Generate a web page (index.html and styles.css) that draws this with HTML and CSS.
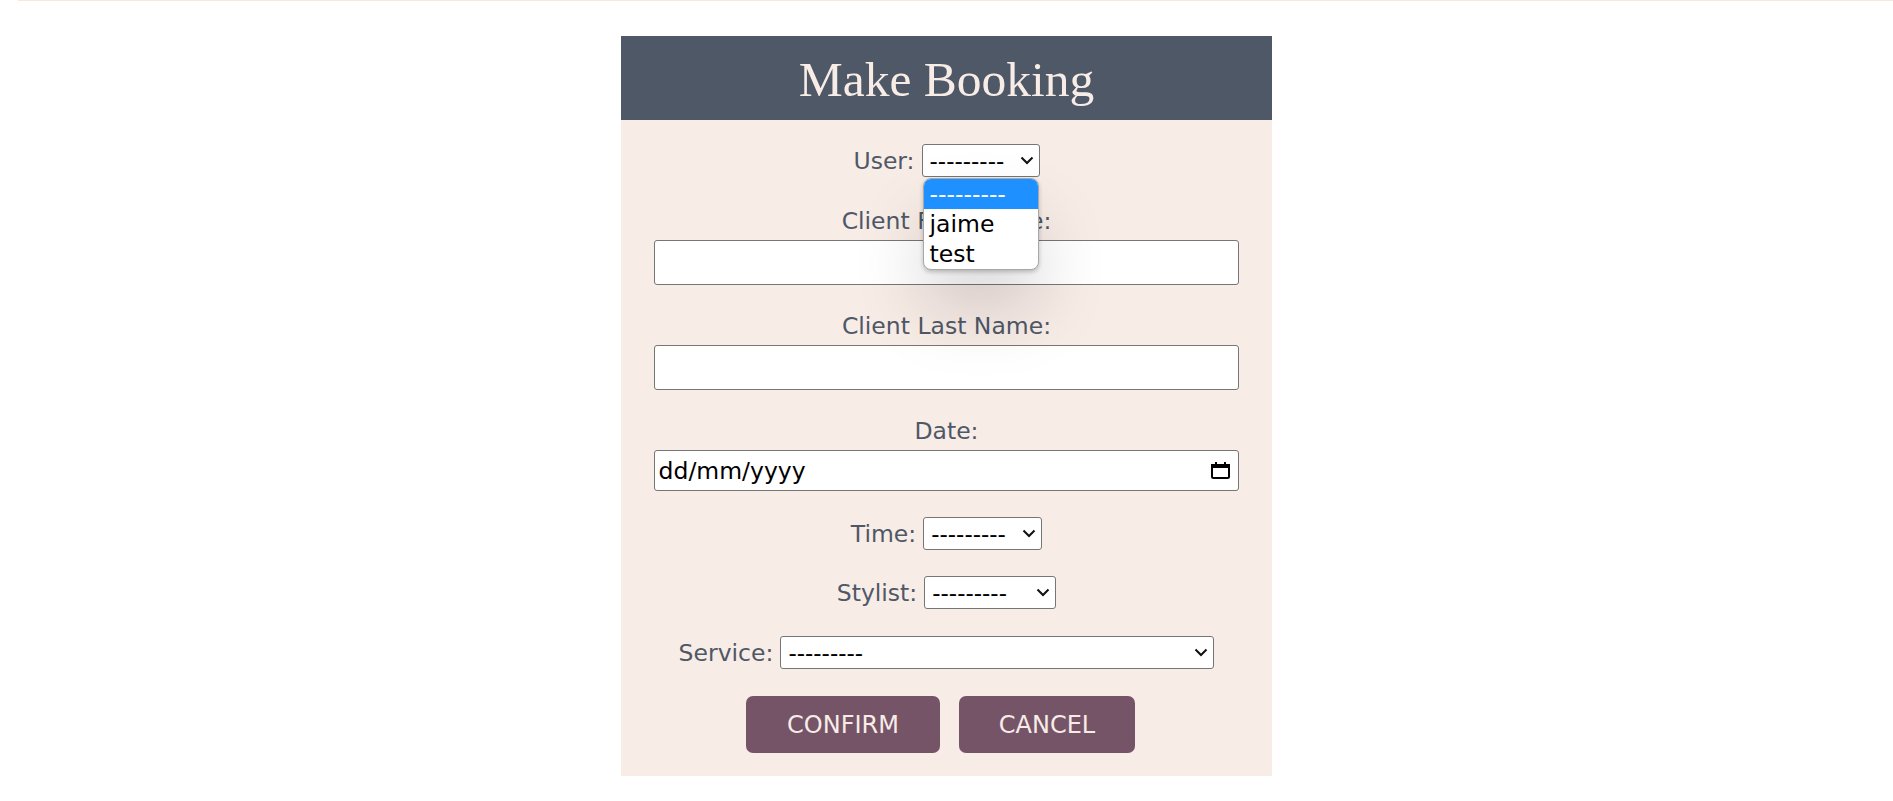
FILE: index.html
```html
<!DOCTYPE html>
<html lang="en">
<head>
<meta charset="utf-8">
<title>Make Booking</title>
<link rel="stylesheet" href="styles.css">
</head>
<body>
<div class="topline"></div>
<main class="booking">
  <h1 class="booking-title">Make Booking</h1>
  <form class="booking-form">
    <div class="inline-row user-row">
      <label class="lbl" for="user">User:</label>
      <div class="select-wrap">
        <select id="user" class="sel sel-user"><option>---------</option><option>jaime</option><option>test</option></select>
        <svg class="chev" width="14" height="9" viewBox="0 0 14 9" aria-hidden="true"><path d="M1.5 1.5 L7 7 L12.5 1.5" fill="none" stroke="#111" stroke-width="2"/></svg>
        <ul class="dropdown">
          <li class="opt opt-active">---------</li>
          <li class="opt">jaime</li>
          <li class="opt">test</li>
        </ul>
      </div>
    </div>
    <div class="field field-first">
      <label class="lbl block-lbl" for="fname">Client First Name:</label>
      <input id="fname" class="text-input" type="text">
    </div>
    <div class="field field-next">
      <label class="lbl block-lbl" for="lname">Client Last Name:</label>
      <input id="lname" class="text-input" type="text">
    </div>
    <div class="field field-next">
      <label class="lbl block-lbl">Date:</label>
      <div class="date-input">
        <span class="date-text">dd/mm/yyyy</span>
        <svg class="cal-icon" width="19" height="17" viewBox="0 0 19 17" aria-hidden="true">
          <rect x="4" y="0" width="2" height="3" fill="#000"/>
          <rect x="13" y="0" width="2" height="3" fill="#000"/>
          <rect x="1" y="3" width="17" height="13" rx="1.5" fill="none" stroke="#000" stroke-width="2"/>
          <rect x="0" y="2" width="19" height="4" fill="#000"/>
        </svg>
      </div>
    </div>
    <div class="inline-row row-time">
      <label class="lbl" for="time">Time:</label>
      <div class="select-wrap">
        <select id="time" class="sel sel-time"><option>---------</option></select>
        <svg class="chev" width="14" height="9" viewBox="0 0 14 9" aria-hidden="true"><path d="M1.5 1.5 L7 7 L12.5 1.5" fill="none" stroke="#111" stroke-width="2"/></svg>
      </div>
    </div>
    <div class="inline-row row-stylist">
      <label class="lbl" for="stylist">Stylist:</label>
      <div class="select-wrap">
        <select id="stylist" class="sel sel-stylist"><option>---------</option></select>
        <svg class="chev" width="14" height="9" viewBox="0 0 14 9" aria-hidden="true"><path d="M1.5 1.5 L7 7 L12.5 1.5" fill="none" stroke="#111" stroke-width="2"/></svg>
      </div>
    </div>
    <div class="inline-row row-service">
      <label class="lbl" for="service">Service:</label>
      <div class="select-wrap">
        <select id="service" class="sel sel-service"><option>---------</option></select>
        <svg class="chev" width="14" height="9" viewBox="0 0 14 9" aria-hidden="true"><path d="M1.5 1.5 L7 7 L12.5 1.5" fill="none" stroke="#111" stroke-width="2"/></svg>
      </div>
    </div>
    <div class="buttons">
      <button type="submit" class="btn btn-confirm">CONFIRM</button>
      <button type="button" class="btn btn-cancel">CANCEL</button>
    </div>
  </form>
</main>
</body>
</html>
```
FILE: styles.css
```css
html, body {
  margin: 0;
  padding: 0;
  background: #ffffff;
}

body {
  font-family: "DejaVu Sans", "Noto Sans", sans-serif;
}

.topline {
  height: 1px;
  margin-left: 18px;
  background: #f9e6df;
}

.booking {
  width: 651px;
  margin: 35px auto 0;
}

.booking-title {
  margin: 0;
  height: 84px;
  padding-top: 2px;
  box-sizing: border-box;
  line-height: 84px;
  background: #4f5866;
  color: #f8ece7;
  text-align: center;
  font-family: "Liberation Serif", "DejaVu Serif", serif;
  font-weight: 400;
  font-size: 49.5px;
}

.booking-form {
  background: #f8ece7;
  padding: 24px 0 23px;
  display: flex;
  flex-direction: column;
  align-items: center;
}

.lbl {
  color: #4f5866;
  font-size: 23.5px;
}

.inline-row {
  display: flex;
  align-items: center;
  justify-content: center;
  gap: 7px;
  height: 33px;
}

.row-time { margin-top: 26px; }
.row-stylist { margin-top: 26px; }
.row-service { margin-top: 27px; }

.select-wrap {
  position: relative;
  display: flex;
}

.sel {
  -webkit-appearance: none;
  appearance: none;
  height: 33px;
  font-family: "DejaVu Sans", sans-serif;
  font-size: 23px;
  color: #000;
  background: #fff;
  border: 1px solid #767676;
  border-radius: 3px;
  padding: 0 24px 0 7px;
  box-sizing: border-box;
}

.chev {
  position: absolute;
  right: 6px;
  top: 12px;
  pointer-events: none;
}

.sel-user { width: 118px; }
.sel-time { width: 119px; }
.sel-stylist { width: 132px; }
.sel-service { width: 434px; }

.dropdown {
  position: absolute;
  top: 34px;
  left: 1px;
  width: 116px;
  margin: 0;
  padding: 0;
  list-style: none;
  background: #fff;
  border: 1px solid #a8a8a8;
  border-radius: 8px;
  overflow: hidden;
  box-sizing: border-box;
  box-shadow: 0 2px 4px rgba(0, 0, 0, 0.22), 0 40px 70px rgba(0, 0, 0, 0.15);
  z-index: 5;
}

.opt {
  height: 30px;
  line-height: 30px;
  padding-left: 6px;
  font-size: 23.5px;
  color: #000;
  white-space: nowrap;
}

.opt-active {
  background: #1e90ff;
  color: #fff;
}

.field {
  width: 90%;
  display: flex;
  flex-direction: column;
  align-items: center;
}

.field-first { margin-top: 30px; }
.field-next { margin-top: 27px; }

.block-lbl {
  display: block;
  height: 28px;
  line-height: 28px;
  text-align: center;
}

.text-input {
  margin-top: 5px;
  width: 100%;
  height: 45px;
  box-sizing: border-box;
  border: 1px solid #767676;
  border-radius: 3px;
  background: #fff;
  font-family: "DejaVu Sans", sans-serif;
  font-size: 23px;
}

.date-input {
  margin-top: 5px;
  width: 100%;
  height: 41px;
  box-sizing: border-box;
  border: 1px solid #767676;
  border-radius: 3px;
  background: #fff;
  display: flex;
  align-items: center;
  justify-content: space-between;
  padding: 0 8px 0 4px;
}

.date-text {
  font-size: 23.5px;
  color: #000;
}

.cal-icon {
  display: block;
}

.buttons {
  margin-top: 27px;
  display: flex;
  gap: 19px;
  padding-right: 12px;
}

.btn {
  height: 57px;
  border: none;
  border-radius: 7px;
  background: #755468;
  color: #f8ece7;
  font-family: "DejaVu Sans", sans-serif;
  font-size: 24px;
  cursor: pointer;
}

.btn-confirm { width: 194px; }
.btn-cancel { width: 176px; }
```
